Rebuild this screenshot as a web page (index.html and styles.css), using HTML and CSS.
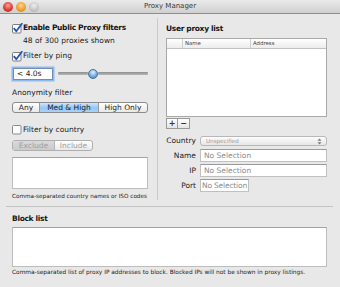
FILE: index.html
```html
<!DOCTYPE html>
<html>
<head>
<meta charset="utf-8">
<link rel="stylesheet" href="styles.css">
</head>
<body>
<div class="window">
  <div class="titlebar">
    <div class="lights">
      <span class="light red"></span>
      <span class="light orange"></span>
      <span class="light gray"></span>
    </div>
    <div class="title">Proxy Manager</div>
    <div></div>
  </div>

  <div class="top">
    <div class="left">
      <div class="check-row r1">
        <svg class="cb" width="11" height="11" viewBox="0 0 11 11"><rect x="0.5" y="1.5" width="8.5" height="8.5" rx="1" fill="#fbfbfb" stroke="#7d7d7d"/><path d="M2.2 5.6 L4.3 8.2 L9.8 0.8" fill="none" stroke="#1f58b8" stroke-width="1.8" stroke-linecap="round" stroke-linejoin="round"/></svg>
        <span class="bold">Enable Public Proxy filters</span>
      </div>
      <div class="sub">48 of 300 proxies shown</div>
      <div class="check-row r2">
        <svg class="cb" width="11" height="11" viewBox="0 0 11 11"><rect x="0.5" y="1.5" width="8.5" height="8.5" rx="1" fill="#fbfbfb" stroke="#7d7d7d"/><path d="M2.2 5.6 L4.3 8.2 L9.8 0.8" fill="none" stroke="#1f58b8" stroke-width="1.8" stroke-linecap="round" stroke-linejoin="round"/></svg>
        <span>Filter by ping</span>
      </div>
      <div class="ping-row">
        <div class="field focus">&lt; 4.0s</div>
        <div class="slider">
          <span class="track left-track"></span>
          <span class="knob"></span>
          <span class="track right-track"></span>
        </div>
      </div>
      <div class="label anon">Anonymity filter</div>
      <div class="seg anon-seg">
        <span class="s s-any">Any</span>
        <span class="s s-med sel">Med &amp; High</span>
        <span class="s s-high">High Only</span>
      </div>
      <div class="check-row r3">
        <svg class="cb" width="11" height="11" viewBox="0 0 11 11"><rect x="0.5" y="1.5" width="8.5" height="8.5" rx="1" fill="#fbfbfb" stroke="#8a8a8a"/></svg>
        <span>Filter by country</span>
      </div>
      <div class="seg dis-seg">
        <span class="s s-exc">Exclude</span>
        <span class="s s-inc">Include</span>
      </div>
      <div class="area country-area"></div>
      <div class="caption">Comma-separated country names or ISO codes</div>
    </div>

    <div class="right">
      <div class="bold heading">User proxy list</div>
      <div class="table">
        <div class="thead">
          <span class="th th0"></span>
          <span class="th th1">Name</span>
          <span class="th th2">Address</span>
        </div>
      </div>
      <div class="pm">
        <span class="pmb">+</span>
        <span class="pmb">−</span>
      </div>
      <div class="form">
        <div class="frow country-row">
          <span class="flabel">Country</span>
          <div class="popup">
            <span>Unspecified</span>
            <svg width="5" height="7" viewBox="0 0 5 7"><path d="M2.5 0.5 L4.5 2.7 L0.5 2.7 Z M2.5 6.5 L4.5 4.3 L0.5 4.3 Z" fill="#777"/></svg>
          </div>
        </div>
        <div class="frow name-row">
          <span class="flabel">Name</span>
          <div class="tfield">No Selection</div>
        </div>
        <div class="frow ip-row">
          <span class="flabel">IP</span>
          <div class="tfield">No Selection</div>
        </div>
        <div class="frow port-row">
          <span class="flabel">Port</span>
          <div class="tfield port">No Selection</div>
        </div>
      </div>
    </div>
  </div>

  <div class="hr"></div>

  <div class="block">
    <div class="bold block-title">Block list</div>
    <div class="area block-area"></div>
    <div class="caption block-cap">Comma-separated list of proxy IP addresses to block. Blocked IPs will not be shown in proxy listings.</div>
  </div>
</div>
</body>
</html>
```

FILE: styles.css
```css
* { box-sizing: border-box; }
html, body { margin: 0; padding: 0; }
body {
  width: 340px;
  height: 287px;
  overflow: hidden;
  background: #e8e8e8;
  font-family: "DejaVu Sans", "Liberation Sans", sans-serif;
  font-size: 7.5px;
  color: #1c1c1c;
}
.window { width: 340px; height: 287px; background: #e8e8e8; }

.titlebar {
  height: 14px;
  border-bottom: 1px solid #8e8e8e;
  background: linear-gradient(#eaeaea, #d0d0d0);
  display: grid;
  grid-template-columns: 1fr auto 1fr;
  align-items: center;
}
.lights { display: flex; gap: 3px; padding-left: 3px; align-items: center; }
.light { width: 10px; height: 10px; border-radius: 50%; display: block; }
.red { background: radial-gradient(circle at 50% 35%, #f7a09a, #d8372f 60%, #a8231d); }
.orange { background: radial-gradient(circle at 50% 35%, #fbd38f, #ee9b26 60%, #c06f12); }
.gray { background: radial-gradient(circle at 50% 35%, #eeeeee, #c4c4c4 60%, #9c9c9c); }
.title { font-size: 7px; color: #383838; line-height: 13px; }

.top { display: flex; padding-left: 12px; margin-top: 4px; }
.left {
  width: 146px;
  height: 182px;
  padding-right: 9px;
  border-right: 1px solid #cacaca;
  display: flex;
  flex-direction: column;
}
.right {
  width: 169px;
  padding-left: 8px;
  display: flex;
  flex-direction: column;
}

.bold { font-weight: bold; letter-spacing: -0.32px; color: #161616; }
.check-row { display: flex; align-items: center; height: 10px; line-height: 10px; }
.cb { display: block; flex: none; }
.r1 { margin-top: 5px; }
.r2 { margin-top: 5px; }
.r3 { margin-top: 12px; }
.sub { margin-top: 3px; height: 10px; line-height: 10px; padding-left: 11px; }

.ping-row { margin-top: 6px; display: flex; align-items: center; height: 13px; }
.field {
  background: #fff;
  border: 1px solid #6f8fb9;
  height: 12px;
  line-height: 10px;
  padding-left: 3px;
  white-space: nowrap;
}
.field.focus {
  width: 40px;
  margin-left: 1px;
  box-shadow: 0 0 0 1.5px #8fbaea;
}
.slider { display: flex; align-items: center; margin-left: 5px; width: 91px; height: 13px; }
.track {
  display: block;
  height: 3px;
  border-radius: 1px;
  background: linear-gradient(#8d8d8d, #b9b9b9);
}
.left-track { width: 30px; }
.right-track { flex: 1; }
.knob {
  display: block;
  width: 10px;
  height: 10px;
  border-radius: 50%;
  border: 1px solid #4a6f9e;
  background: radial-gradient(circle at 50% 30%, #e3f0fc, #78aee6 55%, #3c78c4);
  flex: none;
}

.label { height: 10px; line-height: 10px; }
.anon { margin-top: 8px; }
.seg {
  display: flex;
  height: 11px;
  border: 1px solid #8b8b8b;
  border-radius: 3px;
  overflow: hidden;
  background: linear-gradient(#ffffff, #e9e9e9);
}
.anon-seg { margin-top: 4px; width: 136px; }
.s {
  display: flex;
  align-items: center;
  justify-content: center;
  line-height: 9px;
  border-left: 1px solid #9a9a9a;
}
.s:first-child { border-left: none; }
.s-any { width: 26px; }
.s-med { width: 59px; }
.s-high { flex: 1; }
.sel { background: linear-gradient(#cfe5fb, #94c6f2 55%, #a9d3f7); color: #16233a; }

.dis-seg { margin-top: 5px; width: 81px; border-color: #b0b0b0; color: #a0a0a0; }
.s-exc { width: 41px; background: linear-gradient(#dadada, #cacaca); border-left: none; }
.s-inc { flex: 1; border-left: 1px solid #b5b5b5; }

.area { background: #fff; border: 1px solid #bdbdbd; border-top-color: #a3a3a3; }
.country-area { margin-top: 6px; width: 136px; height: 33px; }
.caption { font-size: 5.7px; line-height: 8px; height: 8px; margin-top: 3px; white-space: nowrap; color: #222; }

.heading { margin-top: 6px; height: 10px; line-height: 10px; }
.table {
  margin-top: 4px;
  width: 161px;
  height: 79px;
  background: #fff;
  border: 1px solid #a9a9a9;
}
.thead {
  display: flex;
  height: 10px;
  background: linear-gradient(#ffffff, #ececec);
  border-bottom: 1px solid #c3c3c3;
}
.th {
  font-size: 5.4px;
  line-height: 9px;
  color: #444;
  padding-left: 2px;
  border-left: 1px solid #d0d0d0;
}
.th0 { width: 15px; border-left: none; }
.th1 { width: 68px; }
.th2 { flex: 1; }

.pm { display: flex; margin-top: 1px; }
.pmb {
  width: 12px;
  height: 11px;
  border: 1px solid #9a9a9a;
  background: linear-gradient(#ffffff, #e4e4e4);
  display: flex;
  align-items: center;
  justify-content: center;
  font-weight: bold;
  font-size: 8px;
  line-height: 9px;
  color: #333;
}
.pmb + .pmb { border-left: none; }

.form { display: flex; flex-direction: column; }
.frow { display: grid; grid-template-columns: 30px 127px; column-gap: 4px; align-items: center; }
.flabel { text-align: right; white-space: nowrap; line-height: 10px; }
.country-row { margin-top: 7px; height: 10px; }
.name-row { margin-top: 3px; height: 13px; }
.ip-row { margin-top: 2px; height: 13px; }
.port-row { margin-top: 2px; height: 13px; }
.popup {
  height: 10px;
  border: 1px solid #b8b8b8;
  border-radius: 3px;
  background: linear-gradient(#fdfdfd, #e6e6e6);
  display: flex;
  align-items: center;
  justify-content: space-between;
  padding: 0 4px 0 5px;
  font-size: 5.6px;
  color: #9a9a9a;
}
.popup svg { display: block; }
.tfield {
  height: 13px;
  background: #fff;
  border: 1px solid #c0c0c0;
  border-top-color: #9a9a9a;
  color: #8a8a8a;
  line-height: 11px;
  padding-left: 3px;
  white-space: nowrap;
}
.tfield.port { width: 49px; padding-left: 1px; letter-spacing: -0.18px; }

.hr { margin: 6px 0 0 6px; width: 327px; height: 1px; background: #c4c4c4; }

.block { padding-left: 12px; display: flex; flex-direction: column; }
.block-title { margin-top: 7px; height: 10px; line-height: 10px; }
.block-area { margin-top: 3px; width: 315px; height: 40px; }
.block-cap { margin-top: 1px; font-size: 5.85px; }
```
